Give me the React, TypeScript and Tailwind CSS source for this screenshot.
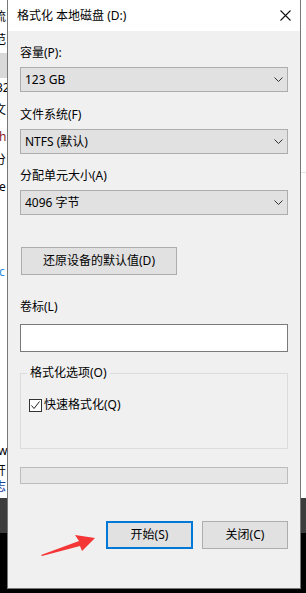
import React from 'react';

const font = "font-['Noto_Sans','Noto_Sans_CJK_SC',sans-serif]";

function Chevron() {
  return (
    <svg width="9" height="5" viewBox="0 0 9 5" fill="none" stroke="#333" strokeWidth="1">
      <path d="M0.5 0.5L4.5 4.5L8.5 0.5" />
    </svg>
  );
}

function Select({ value }: { value: string }) {
  return (
    <div className="h-[25px] border border-[#adadad] bg-[#e1e1e1] flex items-center justify-between pl-[4px] pr-[4px]">
      <span className="text-[12px] leading-[16px] text-black">{value}</span>
      <Chevron />
    </div>
  );
}

function Label({ text, className = '' }: { text: string; className?: string }) {
  return <div className={`text-[12px] leading-[16px] text-black ${className}`}>{text}</div>;
}

function Button({ text, primary = false, className = '' }: { text: string; primary?: boolean; className?: string }) {
  return (
    <div
      className={`h-[28px] bg-[#e1e1e1] flex items-center justify-center text-[12px] text-black ${
        primary ? 'border-2 border-[#0078d7]' : 'border border-[#adadad]'
      } ${className}`}
    >
      {text}
    </div>
  );
}

// clipped bits of the window behind the dialog
function LeftStrip() {
  return (
    <div className="w-[7px] shrink-0 flex flex-col overflow-hidden">
      <div className="h-[498px] bg-white flex flex-col text-[12px] leading-[16px] text-black whitespace-nowrap">
        <div className="h-[9px]" />
        <div className="-ml-[6px]">流</div>
        <div className="h-[7px]" />
        <div className="-ml-[6px]">范</div>
        <div className="h-[5px]" />
        <div className="h-[25px] bg-[#d9d9d9]" />
        <div className="h-[2px]" />
        <div className="-ml-[4px]">32</div>
        <div className="h-[6px]" />
        <div className="-ml-[6px]">文</div>
        <div className="h-[11px]" />
        <div className="-ml-[1px] text-[#8b1a1a]">h</div>
        <div className="h-[7px]" />
        <div className="-ml-[6px]">分</div>
        <div className="h-[11px]" />
        <div className="-ml-[1px]">e</div>
        <div className="h-[69px]" />
        <div className="-ml-[1px] text-[#2a8ad8]">c</div>
        <div className="h-[163px]" />
        <div className="-ml-[2px]">ws</div>
        <div className="h-[4px]" />
        <div className="-ml-[6px]">开</div>
        <div className="-ml-[6px] text-[#1a3f9e]">志</div>
      </div>
      <div className="h-[35px] bg-[#3c3c3c]" />
      <div className="flex-1 bg-black" />
    </div>
  );
}

function RightStrip() {
  return (
    <div className="w-[5px] shrink-0 flex flex-col">
      <div className="h-[172px] bg-white" />
      <div className="h-px bg-[#e5e5e5]" />
      <div className="h-[325px] bg-white" />
      <div className="h-[35px] bg-[#3c3c3c]" />
      <div className="flex-1 bg-black" />
    </div>
  );
}

export default function App() {
  return (
    <div className={`w-[306px] h-[593px] flex bg-black overflow-hidden relative ${font}`}>
      <LeftStrip />

      <div className="w-[294px] shrink-0 flex flex-col">
        <div className="h-[589px] flex flex-col border-x border-b border-[#777]">
          <div className="h-[31px] bg-white flex items-center justify-between pl-[9px] pr-[9px]">
            <span className="text-[12px] text-black">格式化 本地磁盘 (D:)</span>
            <svg width="11" height="11" viewBox="0 0 11 11" stroke="#111" strokeWidth="1.1">
              <path d="M0.5 0.5L10.5 10.5M10.5 0.5L0.5 10.5" />
            </svg>
          </div>

          <div className="flex-1 bg-[#f0f0f0] flex flex-col px-[12px] pt-[14px]">
            <Label text="容量(P):" />
            <div className="mt-[6px]">
              <Select value="123 GB" />
            </div>
            <Label text="文件系统(F)" className="mt-[15px]" />
            <div className="mt-[6px]">
              <Select value="NTFS (默认)" />
            </div>
            <Label text="分配单元大小(A)" className="mt-[14px]" />
            <div className="mt-[6px]">
              <Select value="4096 字节" />
            </div>

            <Button text="还原设备的默认值(D)" className="mt-[32px] w-[156px] ml-px" />

            <Label text="卷标(L)" className="mt-[24px]" />
            <div className="mt-[9px] h-[28px] bg-white border border-[#7a7a7a]" />

            <div className="mt-[21px] h-[76px] border border-[#dcdcdc] relative flex flex-col pl-[8px] pt-[23px]">
              <div className="absolute -top-[9px] left-[6px] px-[3px] bg-[#f0f0f0] text-[12px] leading-[16px] text-black">
                格式化选项(O)
              </div>
              <div className="flex items-center gap-[2px]">
                <div className="w-[13px] h-[13px] border border-[#333] bg-white flex items-center justify-center">
                  <svg width="11" height="11" viewBox="0 0 11 11" fill="none" stroke="#222" strokeWidth="1">
                    <path d="M1.5 5.5L4 8.5L9.5 1.5" />
                  </svg>
                </div>
                <span className="text-[12px] leading-[16px] text-black">快速格式化(Q)</span>
              </div>
            </div>

            <div className="mt-[18px] h-[17px] bg-[#e6e6e6] border border-[#bcbcbc]" />

            <div className="mt-[37px] flex justify-end gap-[9px]">
              <Button text="开始(S)" primary className="w-[87px]" />
              <Button text="关闭(C)" className="w-[86px]" />
            </div>
          </div>
        </div>
      </div>

      <RightStrip />

      {/* red annotation arrow */}
      <svg className="absolute left-0 top-0 pointer-events-none" width="306" height="593">
        <polygon points="41,555 79,541 75,535 95,538 82,551 80,546 42,556" fill="#f53636" />
      </svg>
    </div>
  );
}
